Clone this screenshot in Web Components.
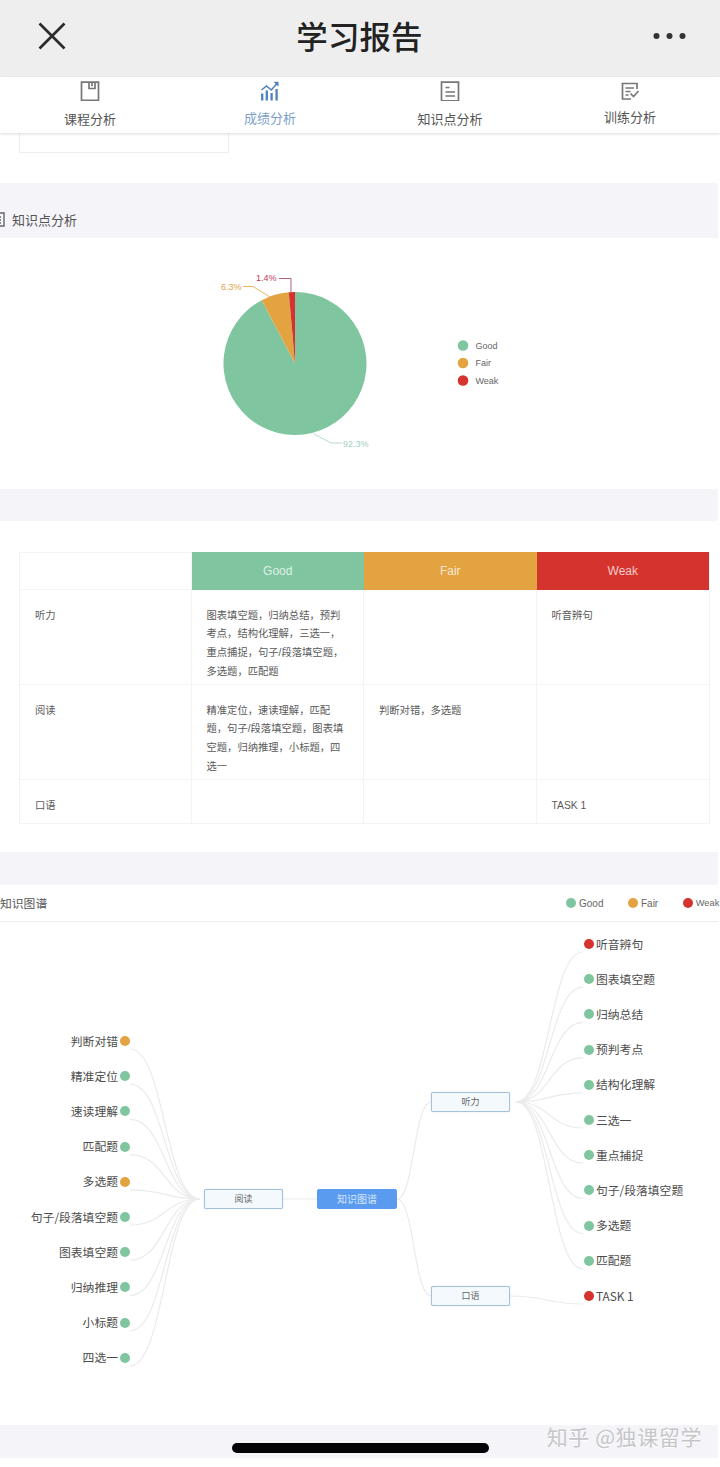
<!DOCTYPE html>
<html lang="zh">
<head>
<meta charset="utf-8">
<title>学习报告</title>
<style>
  html, body { margin: 0; background: #fff; }
  body {
    width: 720px; height: 1467px; overflow: hidden;
    font-family: "Noto Sans CJK SC", "Liberation Sans", sans-serif;
    color: #444;
  }
</style>
</head>
<body>
<report-page>
  <top-bar slot="top">学习报告</top-bar>
  <tab-bar slot="top">
    <tab-item icon="book">课程分析</tab-item>
    <tab-item icon="chart" active>成绩分析</tab-item>
    <tab-item icon="doc">知识点分析</tab-item>
    <tab-item icon="check" lift>训练分析</tab-item>
  </tab-bar>

  <stub-box></stub-box>
  <gray-band height="55"><section-title>知识点分析</section-title></gray-band>
  <pie-panel></pie-panel>
  <gray-band height="32"></gray-band>
  <level-table></level-table>
  <gray-band height="33"></gray-band>
  <map-panel></map-panel>
  <gray-band height="33"><span slot="mark">知乎 @独课留学</span></gray-band>
</report-page>

<script>
const GOOD = "#7fc6a0", FAIR = "#e3a341", WEAK = "#d5332d";

class ReportPage extends HTMLElement {
  constructor() {
    super();
    this.attachShadow({ mode: "open" });
    this.shadowRoot.innerHTML = `
      <style>
        :host { display: block; width: 720px; height: 1467px; position: relative; overflow: hidden; background: #fff; }
        .top { position: relative; z-index: 2; }
        .body { width: 718px; }
        .home {
          position: absolute; left: 232px; top: 1443px; width: 257px; height: 10px;
          border-radius: 5px; background: #050507; z-index: 3;
        }
      </style>
      <div class="top"><slot name="top"></slot></div>
      <div class="body"><slot></slot></div>
      <div class="home"></div>
    `;
  }
}

class TopBar extends HTMLElement {
  constructor() {
    super();
    this.attachShadow({ mode: "open" });
    this.shadowRoot.innerHTML = `
      <style>
        :host { display: flex; align-items: center; justify-content: space-between; height: 77px; width: 720px; background: #eeeeee; box-sizing: border-box; padding: 0 34px 6px 38px; }
        .title { font-size: 31.5px; font-weight: 500; color: #222; letter-spacing: .1px; line-height: 1; }
        svg { display: block; }
      </style>
      <svg width="28" height="28" viewBox="0 0 28 28"><path d="M1.5 1.5 26.5 26.5M26.5 1.5 1.5 26.5" stroke="#2b2b2b" stroke-width="2.7" fill="none"/></svg>
      <div class="title"><slot></slot></div>
      <svg width="33" height="8" viewBox="0 0 33 8"><g fill="#333"><circle cx="3.5" cy="4" r="3"/><circle cx="16.5" cy="4" r="3"/><circle cx="29.5" cy="4" r="3"/></g></svg>
    `;
  }
}

class TabBar extends HTMLElement {
  constructor() {
    super();
    this.attachShadow({ mode: "open" });
    this.shadowRoot.innerHTML = `
      <style>
        :host { display: flex; height: 56px; width: 720px; background: #fff; box-shadow: 0 1px 3px rgba(0,0,0,.14); }
      </style>
      <slot></slot>
    `;
  }
}

const TAB_ICONS = {
  book: `<path d="M1.5 1.2h17v18.200h-17zM9 1.2v6.300h6v-6.300M12 1.2v4" fill="none" stroke="#777" stroke-width="1.700"/>`,
  chart: `<g fill="none" stroke="#4f82bd"><path d="M2.200 19.500v-7M6.800 19.500v-10M11.600 19.500v-7.500M16.600 19.500v-11.500" stroke-width="2.300"/><path d="M1.500 9 6.500 5l4.800 4 6.200-7" stroke-width="1.600"/></g><path d="M13.500 .8h5v5z" fill="#4f82bd"/>`,
  doc: `<path d="M1.500 1.200h17v18.600h-17zM5.500 6.500h4M5.500 11h9.500M5.500 15h9.500" fill="none" stroke="#777" stroke-width="1.700"/>`,
  check: `<path d="M17 8V2.500H2.500v15.500H11M5.500 7h8.500M5.500 10.500h5M5.500 14h3M10.500 12.500l3 3 5-5.500" fill="none" stroke="#777" stroke-width="1.700"/>`
};

class TabItem extends HTMLElement {
  constructor() {
    super();
    this.attachShadow({ mode: "open" });
  }
  connectedCallback() {
    const active = this.hasAttribute("active");
    const gap = this.hasAttribute("lift") ? 6 : active ? 7 : 8;
    this.shadowRoot.innerHTML = `
      <style>
        :host { flex: 0 0 180px; display: flex; flex-direction: column; align-items: center; padding-top: 4px; box-sizing: border-box; }
        svg { display: block; }
        .label { margin-top: ${gap}px; font-size: 13px; line-height: 19px; color: ${active ? "#7c9fc9" : "#555"}; }
      </style>
      <svg width="20" height="20" viewBox="0 0 20 20">${TAB_ICONS[this.getAttribute("icon")]}</svg>
      <div class="label"><slot></slot></div>
    `;
  }
}

class StubBox extends HTMLElement {
  constructor() {
    super();
    this.attachShadow({ mode: "open" });
    this.shadowRoot.innerHTML = `
      <style>
        :host { display: block; height: 50px; background: #fff; padding-left: 19px; box-sizing: border-box; }
        div { width: 210px; height: 20px; box-sizing: border-box; border: 1px solid #efefef; border-top: 0; }
      </style>
      <div></div>
    `;
  }
}

class GrayBand extends HTMLElement {
  constructor() {
    super();
    this.attachShadow({ mode: "open" });
  }
  connectedCallback() {
    this.shadowRoot.innerHTML = `
      <style>
        :host { display: flex; align-items: flex-end; position: relative; height: ${this.getAttribute("height")}px; background: #f4f4f9; }
        .mark { position: absolute; right: 16px; top: -1px; font-size: 21px; line-height: 24px; color: #c6c6c9; letter-spacing: .6px; white-space: nowrap; text-shadow: 0 1px 0 #fff; }
      </style>
      <slot></slot>
      <div class="mark"><slot name="mark"></slot></div>
    `;
  }
}

class SectionTitle extends HTMLElement {
  constructor() {
    super();
    this.attachShadow({ mode: "open" });
    this.shadowRoot.innerHTML = `
      <style>
        :host { display: flex; align-items: center; height: 36px; padding-bottom: 2px; box-sizing: border-box; font-size: 13px; color: #555; }
        svg { display: block; margin-left: -8px; margin-right: 7px; }
      </style>
      <svg width="13" height="15" viewBox="0 0 13 15"><path d="M1 1h11v13H1zM4 5h5M4 8h5M4 11h5" fill="none" stroke="#666" stroke-width="1.400"/></svg>
      <slot></slot>
    `;
  }
}

class PiePanel extends HTMLElement {
  constructor() {
    super();
    this.attachShadow({ mode: "open" });
    // centre of the pie inside the panel
    const cx = 295, cy = 125.500, r = 71.500;
    const pt = (deg) => {
      const a = deg * Math.PI / 180;
      return (cx + r * Math.sin(a)).toFixed(2) + " " + (cy - r * Math.cos(a)).toFixed(2);
    };
    const slice = (from, to, big, fill) =>
      `<path d="M${cx} ${cy}L${pt(from)}A${r} ${r} 0 ${big} 1 ${pt(to)}Z" fill="${fill}"/>`;
    this.shadowRoot.innerHTML = `
      <style>
        :host { display: flex; height: 251px; background: #fff; position: relative; }
        svg { display: block; }
        text { font-family: "Liberation Sans", sans-serif; font-size: 9px; }
        .legend { fill: #666; }
      </style>
      <svg width="718" height="251" viewBox="0 0 718 251">
        ${slice(0, 332.3, 1, GOOD)}
        ${slice(332.3, 355, 0, FAIR)}
        ${slice(355, 360, 0, WEAK)}
        <path d="M270 59 253 48.500H243" fill="none" stroke="${FAIR}" stroke-width=".8"/>
        <text x="221" y="52" fill="${FAIR}">6.3%</text>
        <path d="M291 54V40.500H279" fill="none" stroke="#a03a50" stroke-width=".8"/>
        <text x="256" y="43" fill="#c0395a">1.4%</text>
        <path d="M314 196 331 205H342" fill="none" stroke="#a5d3bc" stroke-width=".8"/>
        <text x="343" y="208.500" fill="#a5cfc0">92.3%</text>
        <circle cx="463" cy="107.500" r="5.300" fill="${GOOD}"/>
        <text class="legend" x="475.500" y="110.800">Good</text>
        <circle cx="463" cy="125" r="5.300" fill="${FAIR}"/>
        <text class="legend" x="475.500" y="128.300">Fair</text>
        <circle cx="463" cy="142.500" r="5.300" fill="${WEAK}"/>
        <text class="legend" x="475.500" y="145.800">Weak</text>
      </svg>
    `;
  }
}

const TABLE_ROWS = [
  { name: "听力", h: 95, good: "图表填空题，归纳总结，预判考点，结构化理解，三选一，重点捕捉，句子/段落填空题，多选题，匹配题", fair: "", weak: "听音辨句" },
  { name: "阅读", h: 95, good: "精准定位，速读理解，匹配题，句子/段落填空题，图表填空题，归纳推理，小标题，四选一", fair: "判断对错，多选题", weak: "" },
  { name: "口语", h: 43, good: "", fair: "", weak: "TASK 1" }
];

class LevelTable extends HTMLElement {
  constructor() {
    super();
    this.attachShadow({ mode: "open" });
    const cell = (t) => `<div class="cell">${t}</div>`;
    const rows = TABLE_ROWS.map(r => cell(r.name) + cell(r.good) + cell(r.fair) + cell(r.weak)).join("");
    this.shadowRoot.innerHTML = `
      <style>
        :host { display: block; height: 331px; padding: 31px 8px 0 19px; box-sizing: border-box; background: #fff; }
        .grid {
          display: grid; grid-template-columns: 171.500px 172.500px 172.500px 172.500px;
          grid-template-rows: 37px ${TABLE_ROWS.map(r => r.h + "px").join(" ")};
          border: 1px solid #f3f3f3; width: 691px; box-sizing: border-box;
        }
        .cell {
          padding: 16.500px 15px 0 15px; font-size: 10.300px; line-height: 18.700px; color: #5a5a5a;
          font-family: "Liberation Sans", "Noto Sans CJK SC", sans-serif;
          border-right: 1px solid #f3f3f3; border-bottom: 1px solid #f3f3f3; box-sizing: border-box;
        }
        .cell:nth-child(4n) { border-right: 0; }
        .cell:nth-last-child(-n+4) { border-bottom: 0; }
        .head { padding: 0; border: 0; color: rgba(255,255,255,.75); font-size: 12px; line-height: 38px; text-align: center; margin-top: -1px; height: 38px; }
      </style>
      <div class="grid">
        <div class="cell" style="border-bottom:1px solid #f3f3f3"></div>
        <div class="cell head" style="background:${GOOD}">Good</div>
        <div class="cell head" style="background:${FAIR}">Fair</div>
        <div class="cell head" style="background:${WEAK}">Weak</div>
        ${rows}
      </div>
    `;
  }
}

const MAP_LEFT = [
  ["判断对错", FAIR], ["精准定位", GOOD], ["速读理解", GOOD], ["匹配题", GOOD], ["多选题", FAIR],
  ["句子/段落填空题", GOOD], ["图表填空题", GOOD], ["归纳推理", GOOD], ["小标题", GOOD], ["四选一", GOOD]
];
const MAP_RIGHT = [
  ["听音辨句", WEAK], ["图表填空题", GOOD], ["归纳总结", GOOD], ["预判考点", GOOD], ["结构化理解", GOOD],
  ["三选一", GOOD], ["重点捕捉", GOOD], ["句子/段落填空题", GOOD], ["多选题", GOOD], ["匹配题", GOOD], ["TASK 1", WEAK]
];

class MapPanel extends HTMLElement {
  constructor() {
    super();
    this.attachShadow({ mode: "open" });
    // the canvas starts at page y 922, node coordinates below are page y minus y0
    const y0 = 922;
    const curve = (x1, y1, x2, y2) => {
      const m = (x1 + x2) / 2;
      return `<path d="M${x1} ${y1}C${m} ${y1} ${m} ${y2} ${x2} ${y2}"/>`;
    };
    let lines = "", nodes = "";
    MAP_LEFT.forEach(([t, c], i) => {
      const y = 1041 + i * 35.2 - y0;
      lines += curve(130, y + 8, 200, 1199 - y0);
      nodes += `<map-leaf side="left" style="top:${y}px;right:${718 - 130}px" color="${c}">${t}</map-leaf>`;
    });
    MAP_RIGHT.forEach(([t, c], i) => {
      const y = 944 + i * 35.2 - y0;
      const from = i === 10 ? [510, 1296 - y0] : [516, 1102 - y0];
      lines += curve(from[0], from[1], 583, y + 8);
      nodes += `<map-leaf side="right" style="top:${y}px;left:584px" color="${c}">${t}</map-leaf>`;
    });
    lines += `<path d="M283 ${1199 - y0}H317"/>`;
    lines += curve(397, 1199 - y0, 431, 1102 - y0);
    lines += curve(397, 1199 - y0, 431, 1296 - y0);
    this.shadowRoot.innerHTML = `
      <style>
        :host { display: block; height: 540px; background: #fff; }
        .head {
          display: flex; align-items: center; height: 37px; padding-bottom: 2px; box-sizing: border-box; border-bottom: 1px solid #ededed;
          font-size: 11.800px; color: #555; position: relative;
        }
        .legend { position: absolute; left: 566px; top: 0; height: 36px; display: flex; align-items: center; font: 10px "Liberation Sans", sans-serif; color: #666; white-space: nowrap; }
        .legend i { flex: none; width: 10px; height: 10px; border-radius: 50%; margin-right: 3px; }
        .legend span { flex: none; margin-right: 24.500px; }
        .legend span:last-child { margin-right: 0; font-size: 9.300px; }
        .canvas { position: relative; height: 503px; overflow: hidden; }
        svg { position: absolute; left: 0; top: 0; }
        svg path { fill: none; stroke: #ebebeb; stroke-width: 1.2; }
        .node {
          position: absolute; width: 79px; height: 20px; box-sizing: border-box; line-height: 18px;
          text-align: center; font-size: 9px; color: #666; background: #f3f9fc;
          border: 1px solid #a5c2dc; border-radius: 2px; box-shadow: 0 0 1px #a5c2dc;
        }
        .root { background: #5a9bf0; border-color: #5a9bf0; box-shadow: none; color: #d6e6fb; font-size: 10px; left: 317px; width: 80px; }
      </style>
      <div class="head">知识图谱
        <div class="legend">
          <i style="background:${GOOD}"></i><span>Good</span>
          <i style="background:${FAIR}"></i><span>Fair</span>
          <i style="background:${WEAK}"></i><span>Weak</span>
        </div>
      </div>
      <div class="canvas">
        <svg width="718" height="503">${lines}</svg>
        <div class="node" style="left:204px;top:${1189 - y0}px">阅读</div>
        <div class="node root" style="top:${1189 - y0}px">知识图谱</div>
        <div class="node" style="left:431px;top:${1092 - y0}px">听力</div>
        <div class="node" style="left:431px;top:${1286 - y0}px">口语</div>
        ${nodes}
      </div>
    `;
  }
}

class MapLeaf extends HTMLElement {
  constructor() {
    super();
    this.attachShadow({ mode: "open" });
  }
  connectedCallback() {
    const left = this.getAttribute("side") === "left";
    this.shadowRoot.innerHTML = `
      <style>
        :host {
          position: absolute; display: flex; align-items: center; gap: 2px; height: 20px; margin-top: -10px;
          font-size: 11.800px; color: #4c4c4c; white-space: nowrap;
          flex-direction: ${left ? "row" : "row-reverse"};
        }
        .t { margin-bottom: 2px; }
        i { width: 10px; height: 10px; border-radius: 50%; background: ${this.getAttribute("color")}; flex: none; }
      </style>
      <span class="t"><slot></slot></span><i></i>
    `;
  }
}

customElements.define("report-page", ReportPage);
customElements.define("top-bar", TopBar);
customElements.define("tab-bar", TabBar);
customElements.define("tab-item", TabItem);
customElements.define("stub-box", StubBox);
customElements.define("gray-band", GrayBand);
customElements.define("section-title", SectionTitle);
customElements.define("pie-panel", PiePanel);
customElements.define("level-table", LevelTable);
customElements.define("map-panel", MapPanel);
customElements.define("map-leaf", MapLeaf);
</script>
</body>
</html>
